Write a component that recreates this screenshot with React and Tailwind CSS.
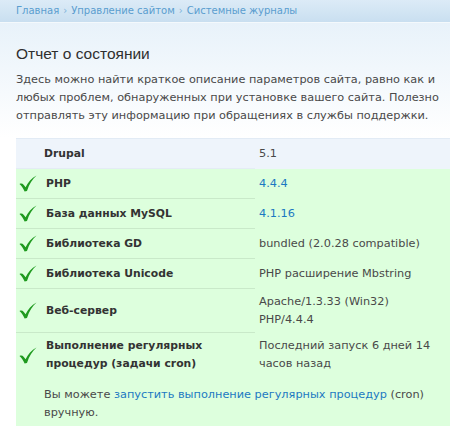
import React from "react";

const Check = () => (
  <svg width="18" height="17" viewBox="0 0 18 17" className="shrink-0">
    <path d="M0.5 9 C2.2 8.2 3.6 8.6 4.8 10 L6.6 12.3 C9 7.4 12.4 3.3 17.5 0.5 C13.4 4.2 10.2 8.9 8 16 L5.6 16.5 C4.2 13.3 2.6 11 0.5 9 Z" fill="#1f9a1f" />
  </svg>
);

const rows = [
  { label: "PHP", value: <span className="text-[#1b79c2]">4.4.4</span>, h: "h-[30px]" },
  { label: "База данных MySQL", value: <span className="text-[#1b79c2]">4.1.16</span>, h: "h-[30px]" },
  { label: "Библиотека GD", value: "bundled (2.0.28 compatible)", h: "h-[30px]" },
  { label: "Библиотека Unicode", value: "PHP расширение Mbstring", h: "h-[30px]" },
  {
    label: "Веб-сервер",
    value: (
      <>
        <span className="block">Apache/1.3.33 (Win32)</span>
        <span className="block">PHP/4.4.4</span>
      </>
    ),
    h: "h-[44px]",
  },
];

export default function App() {
  return (
    <div className="w-[450px] h-[426px] overflow-hidden bg-white text-[#494949] text-[11.3px] leading-[18px]" style={{ fontFamily: '"DejaVu Sans", Verdana, sans-serif' }}>
      <div className="h-[23px] bg-gradient-to-b from-[#dcebf7] to-[#c9dff0] border-b border-[#f4f9fc] pl-[16px] flex items-center text-[10px] text-[#5a9dcf]">
        <span>Главная</span>
        <span className="mx-[4px] text-[#7fb3da]">›</span>
        <span>Управление сайтом</span>
        <span className="mx-[4px] text-[#7fb3da]">›</span>
        <span>Системные журналы</span>
      </div>
      <div className="bg-gradient-to-b from-[#e8f2fa] to-white h-[115px] pl-[16px] pt-[20px]">
        <h1 className="text-[15.5px] leading-[22px] text-[#2f2f2f] mb-[6px]" style={{ fontFamily: '"Liberation Sans", Arial, sans-serif' }}>
          Отчет о состоянии
        </h1>
        <p className="w-[430px]">
          Здесь можно найти краткое описание параметров сайта, равно как и любых проблем, обнаруженных при установке вашего сайта. Полезно отправлять эту информацию при обращениях в службы поддержки.
        </p>
      </div>
      <div className="ml-[16px] w-[460px]">
        <div className="flex h-[31px] bg-[#eef4fb] border-t border-[#e2ebf5]">
          <div className="w-[239px] pl-[28px] flex items-center font-bold text-[10.8px] text-[#333] border-b border-[#e4ecf5]">Drupal</div>
          <div className="flex-1 pl-[4px] flex items-center">5.1</div>
        </div>
        {rows.map((r) => (
          <div key={r.label} className="flex bg-[#ddffdd]">
            <div className={`w-[239px] ${r.h} pl-[3px] flex items-center gap-[9px] font-bold text-[10.8px] text-[#333] border-b border-[#c9e9c9]`}>
              <Check />
              <span>{r.label}</span>
            </div>
            <div className="flex-1 pl-[4px] flex flex-col justify-center">{r.value}</div>
          </div>
        ))}
        <div className="bg-[#ddffdd]">
          <div className="flex">
            <div className="w-[239px] h-[44px] pl-[3px] flex items-center gap-[9px] font-bold text-[10.8px] text-[#333]">
              <Check />
              <span>
                Выполнение регулярных
                <br />
                процедур (задачи cron)
              </span>
            </div>
            <div className="flex-1 pl-[4px] flex flex-col justify-center">
              <span className="block">Последний запуск 6 дней 14</span>
              <span className="block">часов назад</span>
            </div>
          </div>
          <div className="pl-[28px] pt-[9px] pb-[10px] w-[430px]">
            <span className="block">
              Вы можете <span className="text-[#1b79c2]">запустить выполнение регулярных процедур</span> (cron)
            </span>
            <span className="block">вручную.</span>
          </div>
        </div>
      </div>
    </div>
  );
}
